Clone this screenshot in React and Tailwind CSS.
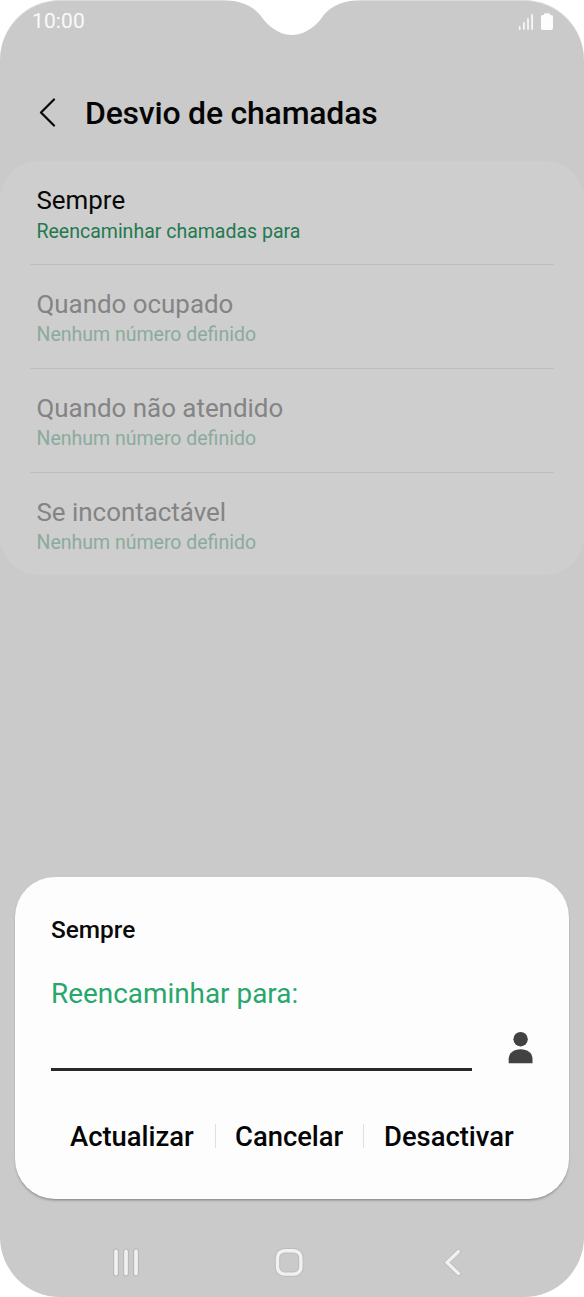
import clsx from 'clsx'

const options = [
  { title: 'Sempre', detail: 'Reencaminhar chamadas para', enabled: true },
  { title: 'Quando ocupado', detail: 'Nenhum número definido' },
  { title: 'Quando não atendido', detail: 'Nenhum número definido' },
  { title: 'Se incontactável', detail: 'Nenhum número definido' },
]

function StatusBar() {
  return (
    <div className="flex h-[41px] items-center justify-between pl-8 pr-[31px] text-[#fafafa]">
      <span className="text-[21px] leading-[41px] tracking-[0.1px]">10:00</span>
      <div className="flex items-center gap-[7px]">
        <svg width="16" height="16" viewBox="0 0 16 16" fill="none" stroke="#f7f7f7" strokeWidth="1.8" strokeLinecap="round">
          <path d="M1.7 13v2M5.9 9v6M10 5v10M14.1 1v14" />
        </svg>
        <svg width="12" height="17" viewBox="0 0 12 17" fill="#fdfdfd">
          <path d="M3 1.3Q3 .2 4 .2h4q1 0 1 1.1V2h1.2Q12 2 12 3.8v11.4Q12 17 10.2 17H1.8Q0 17 0 15.2V3.8Q0 2 1.8 2H3z" />
        </svg>
      </div>
    </div>
  )
}

function Notch() {
  return (
    <svg className="absolute left-[222px] top-0" width="140" height="36" viewBox="0 0 140 36" fill="#fff">
      <path d="M0 0C17 0 31 5.5 39 16C44 24 56 35 70 35C84 35 96 24 101 16C109 5.5 123 0 140 0z" />
    </svg>
  )
}

function OptionRow({ title, detail, enabled }) {
  return (
    <li className="px-[30px]">
      <div className="flex h-[103px] flex-col pl-[6.5px] pt-[23px]">
        <span className={clsx('text-[25.9px] leading-8', enabled ? 'text-[#090909]' : 'text-[#848484]')}>
          {title}
        </span>
        <span
          className={clsx(
            'text-[19.5px]',
            enabled ? 'leading-[31px] text-[#23794e]' : 'leading-[30px] text-[#8aab9c]'
          )}
        >
          {detail}
        </span>
      </div>
    </li>
  )
}

function ForwardDialog() {
  return (
    <section className="mx-[15px] flex h-[322px] flex-col rounded-[40px] bg-[#fdfdfd] pl-9 pr-[35px] shadow-[0_2px_3px_-1px_rgba(0,0,0,0.4)]">
      <h2 className="mt-[37px] text-[24.4px] font-medium leading-8 text-[#0a0a0a]">Sempre</h2>
      <label htmlFor="number" className="mt-[30px] text-[27.9px] leading-9 text-[#27a76c]">
        Reencaminhar para:
      </label>
      <div className="mt-3 flex items-start justify-between">
        <input id="number" className="h-[47px] w-[421px] border-b-[3px] border-[#2a282a] bg-transparent outline-none" />
        <svg className="mt-2" width="26" height="32" viewBox="0 0 26 32" fill="#424242">
          <circle cx="12.6" cy="7.2" r="7.2" />
          <path d="M.7 31.2v-4C.7 21 5.5 17.3 12.6 17.3S24.5 21 24.5 27.2v4z" />
        </svg>
      </div>
      <div className="mt-[48px] flex items-center pl-[19px] text-[27.4px] font-medium leading-9 text-[#050505]">
        <button className="w-[125px] text-left leading-9">Actualizar</button>
        <span className="mb-[2px] ml-5 h-6 w-px bg-[#e0e0e0]" />
        <button className="ml-[19px] w-[109px] text-left leading-9">Cancelar</button>
        <span className="mb-[2px] ml-[19px] h-6 w-px bg-[#e0e0e0]" />
        <button className="ml-5 text-left leading-9">Desactivar</button>
      </div>
    </section>
  )
}

function NavBar() {
  return (
    <nav className="mt-[46px] flex h-[34px] items-center pl-[110px]">
      <svg width="32" height="34" viewBox="0 0 32 34" fill="none" strokeLinecap="round">
        <path d="M6 6.3v22.4M16 6.3v22.4M26 6.3v22.4" stroke="#b8b8b8" strokeWidth="5.8" />
        <path d="M6 6.3v22.4M16 6.3v22.4M26 6.3v22.4" stroke="#f1f1f1" strokeWidth="3.6" />
      </svg>
      <svg className="ml-[131px]" width="32" height="34" viewBox="0 0 32 34" fill="none">
        <rect x="4.5" y="5.7" width="23.4" height="23.4" rx="7" stroke="#bcbcbc" strokeWidth="5.4" />
        <rect x="4.5" y="5.7" width="23.4" height="23.4" rx="7" stroke="#f1f1f1" strokeWidth="3.4" />
      </svg>
      <svg className="ml-[132px]" width="32" height="34" viewBox="0 0 32 34" fill="none" strokeLinecap="round" strokeLinejoin="miter">
        <path d="M21.5 6.5L10 17.5l11.5 11" stroke="#bcbcbc" strokeWidth="5" />
        <path d="M21.5 6.5L10 17.5l11.5 11" stroke="#f1f1f1" strokeWidth="3.2" />
      </svg>
    </nav>
  )
}

export default function App() {
  return (
    <div className="bg-white font-['Roboto','Liberation_Sans',sans-serif]">
      <div className="relative flex h-[1297px] w-[584px] flex-col overflow-hidden rounded-[60px] border-t border-[#dcdcdc] bg-[#cacaca]">
        <StatusBar />
        <header className="flex h-[119px] items-center pl-[39px] pt-[22px]">
          <svg width="17" height="30" viewBox="0 0 17 30" fill="none" stroke="#090909" strokeWidth="2.2" strokeLinecap="round" strokeLinejoin="round">
            <path d="M15 1.5L2 14.5l13 13" />
          </svg>
          <h1 className="ml-[29px] text-[32px] font-medium leading-10 tracking-[-0.22px] text-[#050505]">
            Desvio de chamadas
          </h1>
        </header>
        <ul className="flex h-[414px] flex-col rounded-[38px] bg-[#cecece]">
          {options.map((option, i) => (
            <div key={option.title}>
              {i > 0 && <div className="mx-[30px] h-px bg-[#bebebe]" />}
              <OptionRow {...option} />
            </div>
          ))}
        </ul>
        <div className="grow" />
        <div className="h-[420px] shrink-0">
          <ForwardDialog />
          <NavBar />
        </div>
      </div>
      <div className="absolute left-0 top-0">
        <Notch />
      </div>
    </div>
  )
}
